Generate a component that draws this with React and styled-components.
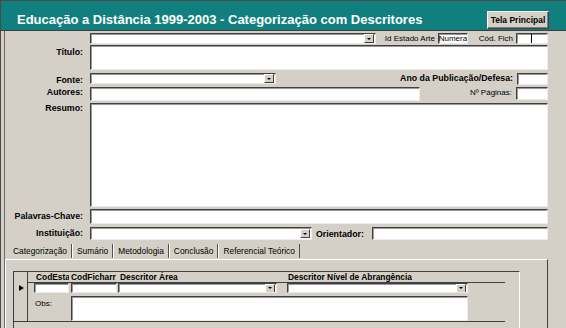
import React from 'react';
import styled, { createGlobalStyle } from 'styled-components';

const FONT = "'Liberation Sans', Arial, sans-serif";

const GlobalStyle = createGlobalStyle`
  * { box-sizing: border-box; }
  html, body { margin: 0; padding: 0; background: #d4d0c8; }
  body { font-family: ${FONT}; color: #000; }
`;

const Window = styled.div`
  width: 566px;
  height: 328px;
  overflow: hidden;
  display: flex;
  flex-direction: column;
  background: #d4d0c8;
  border-top: 1px solid #4a4a4a;
  border-left: 1px solid #4a4a4a;
`;

const TitleBar = styled.div`
  flex: none;
  height: 30px;
  display: flex;
  align-items: flex-end;
  justify-content: space-between;
  padding: 0 17px 1px 16px;
  background: #117f7e;
  border-bottom: 1px solid #3c3c3c;
`;

const Title = styled.h1`
  margin: 0 0 2px;
  font: bold 13px/15px ${FONT};
  color: #fff;
  white-space: nowrap;
`;

const MainButton = styled.button`
  width: 62px;
  height: 18px;
  padding: 0;
  font: bold 8.5px ${FONT};
  color: #000;
  background: #d4d0c8;
  border: 1px solid;
  border-color: #fff #404040 #404040 #fff;
  box-shadow: inset -1px -1px 0 #808080;
`;

const Body = styled.div`
  flex: 1;
  display: flex;
  min-height: 0;
`;

const LeftStrip = styled.div`
  flex: none;
  width: 4px;
  border-right: 1px solid #6a6a6a;
`;

const Main = styled.div`
  flex: none;
  width: 543px;
  display: flex;
  flex-direction: column;
  padding-top: 2px;
`;

const RightStrip = styled.div`
  flex: 1;
`;

const Row = styled.div`
  flex: none;
  display: flex;
  align-items: flex-start;
  height: ${(p) => p.$h}px;
  margin-top: ${(p) => p.$mt || 0}px;
`;

const Label = styled.div`
  flex: ${(p) => (p.$grow ? 1 : 'none')};
  width: ${(p) => (p.$w ? `${p.$w}px` : 'auto')};
  padding: ${(p) => p.$top || 0}px ${(p) => p.$pr ?? 7}px 0 ${(p) => p.$pl || 0}px;
  text-align: ${(p) => (p.$left ? 'left' : 'right')};
  font: ${(p) => (p.$normal ? 'normal 8px' : 'bold 8.8px')}/11px ${FONT};
  color: #000;
  white-space: nowrap;
`;

const Field = styled.div`
  flex: ${(p) => (p.$w ? 'none' : 1)};
  width: ${(p) => (p.$w ? `${p.$w}px` : 'auto')};
  height: ${(p) => (p.$h ? `${p.$h}px` : '100%')};
  margin-left: ${(p) => p.$ml || 0}px;
  display: flex;
  align-items: center;
  justify-content: ${(p) => (p.$combo ? 'flex-end' : 'flex-start')};
  overflow: hidden;
  background: #fff;
  border-top: 1px solid #404040;
  border-left: 1px solid #404040;
  border-right: 1px solid #ecebe8;
  border-bottom: 1px solid #ecebe8;
  box-shadow: inset 1px 1px 0 #9a9a9a;
  font: 8px/9px ${FONT};
  white-space: nowrap;
`;

const DropButton = styled.span`
  flex: none;
  width: 10px;
  height: 9px;
  margin-right: 1px;
  display: flex;
  align-items: center;
  justify-content: center;
  background: #d4d0c8;
  border: 1px solid;
  border-color: #fff #404040 #404040 #fff;

  &::after {
    content: '';
    border-left: 2px solid transparent;
    border-right: 2px solid transparent;
    border-top: 2px solid #000;
  }
`;

const Clipped = styled.span`
  margin-left: -3px;
  color: #000;
`;

const Caret = styled.span`
  width: 1px;
  height: 9px;
  margin-left: 14px;
  background: #000;
`;

const TabRow = styled.div`
  flex: none;
  display: flex;
  height: 15px;
  margin-top: 4px;
  padding-left: 3px;
`;

const Tab = styled.div`
  height: 14px;
  padding: 0 4px;
  font: 8.4px/14px ${FONT};
  white-space: nowrap;
  border-left: 1px solid ${(p) => (p.$active ? 'transparent' : '#fff')};
  border-right: 1px solid #505050;
`;

const Pane = styled.div`
  flex: 1;
  min-height: 0;
  padding: 11px 0 0 7px;
  border-top: 1px solid #fff;
  border-left: 1px solid #fff;
  border-right: 1px solid #404040;
`;

const Subform = styled.div`
  width: 507px;
  height: 100%;
  border-top: 1px solid #404040;
  border-left: 1px solid #404040;
  border-right: 1px solid #fff;
`;

const SubRow = styled.div`
  display: flex;
`;

const Selector = styled.div`
  flex: none;
  width: 14px;
  padding: ${(p) => (p.$current ? '2px 0 0 5px' : 0)};
  border-right: 1px solid #404040;
  border-bottom: ${(p) => (p.$current ? '1px solid #404040' : 'none')};

  &::after {
    content: '';
    display: ${(p) => (p.$current ? 'block' : 'none')};
    width: 0;
    height: 0;
    border-top: 3.5px solid transparent;
    border-bottom: 3.5px solid transparent;
    border-left: 5px solid #000;
  }
`;

const HeaderCells = styled.div`
  width: 477px;
  height: 11px;
  display: flex;
  padding-left: 6px;
  border-bottom: 1px solid #404040;
`;

const HeadCell = styled.div`
  flex: none;
  width: ${(p) => p.$w}px;
  margin-left: ${(p) => p.$ml || 0}px;
  padding-left: ${(p) => p.$pl || 0}px;
  overflow: hidden;
  white-space: nowrap;
  font: bold 8.4px/10px ${FONT};
`;

const RecordBody = styled.div`
  width: 477px;
  border-bottom: 1px solid #404040;
`;

const Line = styled.div`
  display: flex;
  align-items: flex-start;
  height: ${(p) => p.$h}px;
  margin-top: ${(p) => p.$mt || 0}px;
  padding-left: ${(p) => p.$pl || 0}px;
`;

const App = () => {
  return (
    <>
      <GlobalStyle />
      <Window>
        <TitleBar>
          <Title>Educação a Distância 1999-2003 - Categorização com Descritores</Title>
          <MainButton type="button">Tela Principal</MainButton>
        </TitleBar>
        <Body>
          <LeftStrip />
          <Main>
            <Row $h={11}>
              <Label $w={85} />
              <Field $w={286} $combo>
                <DropButton />
              </Field>
              <Label $w={62} $normal $pr={3}>Id Estado Arte</Label>
              <Field $w={30}>
                <Clipped>(Numeração Automática)</Clipped>
              </Field>
              <Label $w={48} $normal $pr={3}>Cód. Fich</Label>
              <Field>
                <Caret />
              </Field>
            </Row>

            <Row $h={25} $mt={1}>
              <Label $w={85} $top={2}>Título:</Label>
              <Field />
            </Row>

            <Row $h={12} $mt={3}>
              <Label $w={85} $top={2}>Fonte:</Label>
              <Field $w={186} $h={11} $combo>
                <DropButton />
              </Field>
              <Label $grow $pr={4}>Ano da Publicação/Defesa:</Label>
              <Field $w={31} />
            </Row>

            <Row $h={14} $mt={2}>
              <Label $w={85}>Autores:</Label>
              <Field $w={330} />
              <Label $grow $normal $pr={4}>Nº Páginas:</Label>
              <Field $w={32} $h={13} />
            </Row>

            <Row $h={104} $mt={2}>
              <Label $w={85}>Resumo:</Label>
              <Field />
            </Row>

            <Row $h={15} $mt={2}>
              <Label $w={85} $top={2}>Palavras-Chave:</Label>
              <Field />
            </Row>

            <Row $h={13} $mt={3}>
              <Label $w={85} $top={1}>Instituição:</Label>
              <Field $w={222} $combo>
                <DropButton />
              </Field>
              <Label $w={60} $left $pl={4} $pr={0} $top={2}>Orientador:</Label>
              <Field />
            </Row>

            <TabRow>
              <Tab $active>Categorização</Tab>
              <Tab>Sumário</Tab>
              <Tab>Metodologia</Tab>
              <Tab>Conclusão</Tab>
              <Tab>Referencial Teórico</Tab>
            </TabRow>

            <Pane>
              <Subform>
                <SubRow>
                  <Selector />
                  <HeaderCells>
                    <HeadCell $w={35} $pl={2}>CodEsta</HeadCell>
                    <HeadCell $w={46} $ml={2}>CodFicharr</HeadCell>
                    <HeadCell $w={160} $ml={1} $pl={2}>Descritor Área</HeadCell>
                    <HeadCell $w={181} $ml={9} $pl={1}>Descritor Nível de Abrangência</HeadCell>
                  </HeaderCells>
                </SubRow>
                <SubRow>
                  <Selector $current />
                  <RecordBody>
                    <Line $h={11} $pl={6}>
                      <Field $w={35} $h={10} />
                      <Field $w={46} $h={10} $ml={2} />
                      <Field $w={159} $h={10} $ml={1} $combo>
                        <DropButton />
                      </Field>
                      <Field $w={181} $h={10} $ml={10} $combo>
                        <DropButton />
                      </Field>
                    </Line>
                    <Line $h={25} $mt={2}>
                      <Label $w={43} $left $normal $pl={7} $top={2}>Obs:</Label>
                      <Field $w={397} />
                    </Line>
                  </RecordBody>
                </SubRow>
              </Subform>
            </Pane>
          </Main>
          <RightStrip />
        </Body>
      </Window>
    </>
  );
};

export default App;
